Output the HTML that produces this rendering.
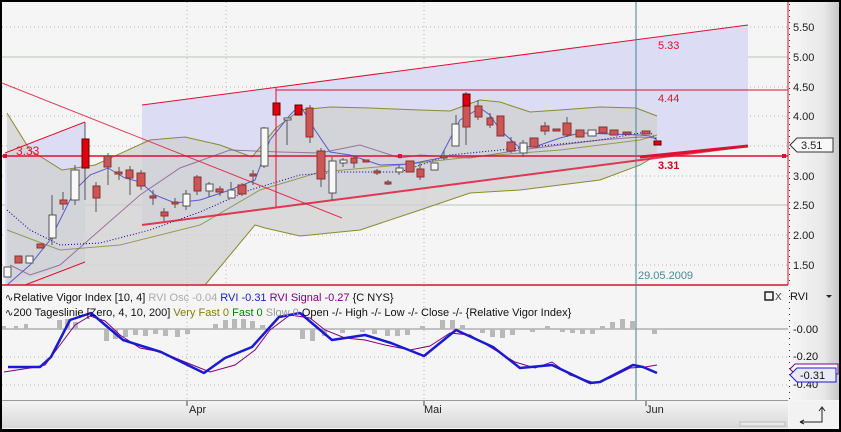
<!DOCTYPE html>
<html><head><meta charset="utf-8"><style>
html,body{margin:0;padding:0;background:#000;}
svg{display:block;font-family:"Liberation Sans",sans-serif;}
</style></head><body>
<svg width="841" height="432" viewBox="0 0 841 432" xmlns="http://www.w3.org/2000/svg">
<defs>
<linearGradient id="ax" x1="0" x2="1" y1="0" y2="0"><stop offset="0" stop-color="#f6f6f6"/><stop offset="0.7" stop-color="#e8e8e8"/><stop offset="1" stop-color="#c8c8c8"/></linearGradient>
<linearGradient id="tx" x1="0" x2="0" y1="0" y2="1"><stop offset="0" stop-color="#f4f4f4"/><stop offset="1" stop-color="#d8d8d8"/></linearGradient>
</defs>
<rect x="0" y="0" width="841" height="432" fill="#000"/>
<rect x="2" y="2" width="837" height="427" fill="#f5f5f5"/>
<!-- right axis -->
<rect x="789" y="2" width="50" height="398" fill="url(#ax)"/>
<!-- grid -->
<g stroke="#b8b8b8" stroke-dasharray="1,3">
<line x1="2" y1="27" x2="788" y2="27"/><line x1="2" y1="87" x2="788" y2="87"/><line x1="2" y1="116" x2="788" y2="116"/>
<line x1="2" y1="146" x2="788" y2="146"/><line x1="2" y1="176" x2="788" y2="176"/><line x1="2" y1="235" x2="788" y2="235"/><line x1="2" y1="265" x2="788" y2="265"/>
<line x1="187" y1="2" x2="187" y2="400"/><line x1="424" y1="2" x2="424" y2="400"/><line x1="226" y1="2" x2="226" y2="285"/>
<line x1="2" y1="357" x2="788" y2="357"/><line x1="2" y1="385" x2="788" y2="385"/>
</g>
<g stroke="#b8c4b8"><line x1="2" y1="57" x2="788" y2="57"/><line x1="2" y1="205" x2="788" y2="205"/></g>
<!-- channels -->
<polygon points="142,105 748,25 748,146 142,225" fill="#dcdcf4"/>
<polygon points="5,153 85,122 85,262 5,285" fill="#dcdcf4"/>
<!-- bollinger -->
<polygon points="7,113 30,150 62,170 95,165 150,140 185,137 220,145 252,157 276,128 300,110 330,107 370,108 420,110 450,111 480,100 500,102 530,112 560,110 600,107 636,108 657,116 657,155 640,165 600,180 520,190 470,193 420,210 360,230 300,236 265,228 255,225 205,285 7,285" fill="#cfcfcf" opacity="0.7"/>
<polyline points="7,113 30,150 62,170 95,165 150,140 185,137 220,145 252,157 276,128 300,110 330,107 370,108 420,110 450,111 480,100 500,102 530,112 560,110 600,107 636,108 657,116" fill="none" stroke="#8a8a30" stroke-width="1"/>
<polyline points="657,155 640,165 600,180 520,190 470,193 420,210 360,230 300,236 265,228 255,225 205,285" fill="none" stroke="#8a8a30"/>
<polyline points="7,230 60,250 120,245 200,225 260,190 320,172 400,165 470,157 560,150 640,140 657,135" fill="none" stroke="#8a8a30" opacity="0.8"/>
<polyline points="10,265 30,275 60,265 100,230 140,195 180,168 230,150 280,152 320,153 360,145 400,158 420,155 470,158 520,150 600,140 640,137 657,138" fill="none" stroke="#8a5a8a" opacity="0.8"/>
<polyline points="7,210 30,230 60,245 100,243 150,230 200,212 250,190 300,175 340,172 400,172 450,155 500,150 550,145 600,140 640,133 650,132 657,140" fill="none" stroke="#000080" stroke-dasharray="1,2"/>
<polyline points="7,285 30,265 50,240 75,190 90,175 108,168 125,178 140,182 155,195 175,203 200,200 230,190 255,180 270,140 290,115 300,105 315,130 330,152 350,155 380,165 410,164 440,158 460,120 480,108 490,115 500,130 520,148 540,145 560,138 580,133 610,134 640,135 650,136 657,140" fill="none" stroke="#5a5ad0"/>
<!-- red lines -->
<g stroke="#e01030" fill="none">
<line x1="142" y1="105" x2="748" y2="25"/>
<line x1="142" y1="225" x2="748" y2="146" stroke-width="2" opacity="0.8"/>
<line x1="640" y1="157" x2="748" y2="146" stroke-width="3"/>
<line x1="5" y1="153" x2="85" y2="122"/>
<line x1="25" y1="285" x2="85" y2="262"/>
<line x1="2" y1="83" x2="342" y2="218" opacity="0.8"/>
<line x1="276" y1="90" x2="788" y2="90"/>
<line x1="276" y1="88" x2="276" y2="207"/>
<line x1="2" y1="156" x2="788" y2="156" stroke-width="1.5"/>
<line x1="2" y1="285" x2="788" y2="285" stroke-width="1.5"/>
<line x1="788" y1="2" x2="788" y2="285"/>
</g>
<rect x="3" y="154" width="4" height="4" fill="#e01030"/><rect x="398" y="154" width="4" height="4" fill="#e01030"/><rect x="782" y="154" width="4" height="4" fill="#e01030"/>
<text x="16" y="155" font-size="12" fill="#e01030">3.33</text>
<text x="658" y="49" font-size="11" fill="#e01030">5.33</text>
<text x="658" y="102" font-size="11" fill="#e01030">4.44</text>
<text x="658" y="169" font-size="11" fill="#d00020" font-weight="bold">3.31</text>
<!-- candles -->
<g stroke="#555" stroke-width="1">
<line x1="52" y1="195" x2="52" y2="245"/><line x1="63" y1="192" x2="63" y2="210"/><line x1="75" y1="165" x2="75" y2="205"/>
<line x1="85" y1="122" x2="85" y2="200"/><line x1="96" y1="182" x2="96" y2="212"/><line x1="108" y1="153" x2="108" y2="185"/>
<line x1="119" y1="167" x2="119" y2="180"/><line x1="130" y1="166" x2="130" y2="195"/><line x1="141" y1="170" x2="141" y2="190"/>
<line x1="153" y1="190" x2="153" y2="205"/><line x1="164" y1="208" x2="164" y2="221"/><line x1="175" y1="198" x2="175" y2="208"/>
<line x1="186" y1="190" x2="186" y2="210"/><line x1="197" y1="175" x2="197" y2="195"/><line x1="209" y1="182" x2="209" y2="197"/>
<line x1="220" y1="186" x2="220" y2="196"/><line x1="231" y1="182" x2="231" y2="198"/><line x1="242" y1="183" x2="242" y2="196"/>
<line x1="253" y1="170" x2="253" y2="185"/><line x1="264" y1="127" x2="264" y2="168"/><line x1="287" y1="118" x2="287" y2="145"/>
<line x1="310" y1="105" x2="310" y2="143"/><line x1="321" y1="148" x2="321" y2="187"/><line x1="332" y1="157" x2="332" y2="200"/>
<line x1="343" y1="158" x2="343" y2="167"/><line x1="354" y1="155" x2="354" y2="168"/><line x1="377" y1="169" x2="377" y2="175"/>
<line x1="388" y1="180" x2="388" y2="185"/><line x1="399" y1="165" x2="399" y2="175"/><line x1="420" y1="163" x2="420" y2="180"/>
<line x1="444" y1="150" x2="444" y2="160"/><line x1="456" y1="115" x2="456" y2="145"/><line x1="466" y1="92" x2="466" y2="145"/>
<line x1="478" y1="100" x2="478" y2="120"/><line x1="490" y1="113" x2="490" y2="128"/><line x1="511" y1="137" x2="511" y2="153"/>
<line x1="523" y1="140" x2="523" y2="157"/><line x1="545" y1="122" x2="545" y2="135"/><line x1="567" y1="117" x2="567" y2="137"/>
</g>
<g fill="#cc5555" stroke="#883333">
<rect x="15" y="256" width="7" height="7"/><rect x="37" y="244" width="7" height="4"/><rect x="60" y="200" width="7" height="4"/>
<rect x="93" y="186" width="7" height="12"/><rect x="104" y="156" width="7" height="11"/><rect x="115" y="172" width="7" height="2"/>
<rect x="126" y="170" width="7" height="8"/><rect x="137" y="173" width="8" height="13"/><rect x="150" y="196" width="6" height="2"/>
<rect x="161" y="212" width="7" height="4"/><rect x="172" y="202" width="6" height="2"/><rect x="194" y="177" width="7" height="14"/>
<rect x="216" y="189" width="7" height="3"/><rect x="238" y="185" width="8" height="9"/><rect x="250" y="174" width="6" height="2"/>
<rect x="306" y="108" width="7" height="29"/><rect x="317" y="151" width="8" height="28"/><rect x="351" y="158" width="6" height="5"/>
<rect x="363" y="160" width="6" height="2"/><rect x="374" y="171" width="6" height="2"/><rect x="385" y="182" width="6" height="2"/>
<rect x="406" y="161" width="8" height="11"/><rect x="417" y="169" width="7" height="8"/><rect x="441" y="156" width="6" height="2"/>
<rect x="475" y="106" width="7" height="11"/><rect x="487" y="118" width="6" height="7"/><rect x="497" y="116" width="7" height="20"/>
<rect x="507" y="142" width="8" height="9"/><rect x="530" y="138" width="8" height="9"/><rect x="541" y="126" width="8" height="5"/>
<rect x="553" y="129" width="7" height="2"/><rect x="563" y="123" width="8" height="12"/><rect x="576" y="130" width="8" height="7"/>
<rect x="599" y="127" width="8" height="6"/><rect x="610" y="130" width="8" height="5"/><rect x="623" y="132" width="8" height="2"/>
<rect x="642" y="131" width="8" height="3"/><rect x="463" y="100" width="7" height="27"/>
</g>
<g fill="#e00010" stroke="#600">
<rect x="82" y="139" width="7" height="29"/><rect x="273" y="103" width="7" height="12"/><rect x="295" y="105" width="7" height="10"/>
<rect x="463" y="94" width="7" height="12"/><rect x="654" y="141" width="7" height="4"/>
</g>
<g fill="#f8f8f8" stroke="#555">
<rect x="4" y="267" width="7" height="10"/><rect x="26" y="256" width="7" height="7"/><rect x="49" y="215" width="7" height="23"/>
<rect x="71" y="170" width="8" height="30"/><rect x="183" y="194" width="7" height="12"/><rect x="206" y="184" width="7" height="7"/>
<rect x="228" y="190" width="7" height="8"/><rect x="261" y="128" width="7" height="38"/><rect x="284" y="118" width="7" height="2"/>
<rect x="329" y="161" width="7" height="32"/><rect x="340" y="160" width="7" height="3"/><rect x="396" y="168" width="7" height="4"/>
<rect x="431" y="163" width="7" height="7"/><rect x="452" y="124" width="7" height="22"/><rect x="520" y="143" width="7" height="10"/>
<rect x="588" y="130" width="8" height="6"/>
</g>
<!-- price axis labels -->
<g font-size="11" fill="#222">
<text x="793" y="31">5.50</text><text x="793" y="61">5.00</text><text x="793" y="91">4.50</text><text x="793" y="120">4.00</text>
<text x="793" y="180">3.00</text><text x="793" y="209">2.50</text><text x="793" y="239">2.00</text><text x="793" y="269">1.50</text>
</g>
<g stroke="#333" stroke-dasharray="1,5"><line x1="789.5" y1="4" x2="789.5" y2="284"/></g>
<polygon points="790,145 797,138 833,138 833,152 797,152" fill="#f8f8f8" stroke="#333"/>
<text x="801" y="149" font-size="11" fill="#222">3.51</text>
<!-- lower panel -->
<line x1="636" y1="2" x2="636" y2="400" stroke="#4a8090"/>
<text x="638" y="279" font-size="11" fill="#4a8898">29.05.2009</text>
<line x1="2" y1="329" x2="788" y2="329" stroke="#909090"/>
<g fill="#b8b8b8">
<rect x="2" y="326" width="4" height="3"/><rect x="14" y="326" width="4" height="3"/><rect x="24" y="324" width="4" height="5"/>
<rect x="57" y="320" width="5" height="9"/><rect x="65" y="319" width="5" height="10"/><rect x="73" y="322" width="5" height="7"/>
<rect x="104" y="329" width="5" height="12"/><rect x="113" y="329" width="5" height="10"/><rect x="123" y="329" width="5" height="8"/>
<rect x="133" y="329" width="5" height="6"/><rect x="143" y="329" width="5" height="7"/><rect x="153" y="329" width="5" height="5"/>
<rect x="163" y="329" width="5" height="7"/><rect x="175" y="329" width="5" height="8"/><rect x="185" y="329" width="5" height="5"/>
<rect x="213" y="324" width="5" height="5"/><rect x="223" y="320" width="5" height="9"/><rect x="232" y="319" width="5" height="10"/>
<rect x="241" y="319" width="5" height="10"/><rect x="250" y="321" width="5" height="8"/><rect x="260" y="325" width="5" height="4"/>
<rect x="300" y="329" width="5" height="10"/><rect x="310" y="329" width="5" height="12"/><rect x="322" y="329" width="5" height="7"/>
<rect x="340" y="329" width="5" height="4"/><rect x="360" y="329" width="5" height="3"/><rect x="372" y="329" width="5" height="5"/>
<rect x="385" y="329" width="5" height="7"/><rect x="395" y="329" width="5" height="7"/><rect x="405" y="329" width="5" height="6"/>
<rect x="420" y="326" width="5" height="3"/><rect x="440" y="320" width="5" height="9"/><rect x="450" y="320" width="5" height="9"/>
<rect x="460" y="325" width="5" height="4"/><rect x="480" y="329" width="5" height="4"/><rect x="490" y="329" width="5" height="8"/>
<rect x="500" y="329" width="5" height="9"/><rect x="510" y="329" width="5" height="6"/><rect x="530" y="329" width="5" height="3"/>
<rect x="545" y="326" width="5" height="3"/><rect x="560" y="329" width="5" height="3"/><rect x="570" y="329" width="5" height="4"/>
<rect x="580" y="329" width="5" height="5"/><rect x="590" y="329" width="5" height="5"/><rect x="600" y="326" width="5" height="3"/>
<rect x="610" y="322" width="5" height="7"/><rect x="620" y="319" width="5" height="10"/><rect x="630" y="321" width="5" height="8"/>
<rect x="652" y="329" width="5" height="5"/>
</g>
<polyline points="4,372 30,368 45,365 60,345 75,325 90,316 105,321 120,335 140,348 161,352 185,362 210,372 235,365 255,350 270,330 290,315 310,318 325,330 345,338 365,340 385,345 410,350 430,346 450,333 470,335 490,347 515,362 535,368 552,362 570,375 595,383 610,378 630,368 645,367 657,365" fill="none" stroke="#800080" stroke-width="1"/>
<polyline points="8,367 40,367 51,357 70,320 91,313 123,340 161,352 204,373 225,358 252,347 279,317 300,313 332,340 365,335 391,343 424,356 456,330 493,347 520,368 552,365 590,383 600,382 633,365 643,367 657,373" fill="none" stroke="#1a1ad0" stroke-width="2.5" stroke-linejoin="round"/>
<rect x="2" y="286" width="786" height="30" fill="#f5f5f5" opacity="0"/>
<g font-size="11" fill="#111">
<text x="5" y="301"><tspan font-size="10">∿</tspan>Relative Vigor Index [10, 4] <tspan fill="#aaa">RVI Osc -0.04</tspan> <tspan fill="#1a1ad0">RVI -0.31</tspan> <tspan fill="#800080">RVI Signal -0.27</tspan> {C NYS}</text>
<text x="5" y="316"><tspan font-size="10">∿</tspan>200 Tageslinie [Zero, 4, 10, 200] <tspan fill="#808000">Very Fast 0</tspan> <tspan fill="#008000">Fast 0</tspan> <tspan fill="#999">Slow 0</tspan> Open -/- High -/- Low -/- Close -/- {Relative Vigor Index}</text>
<text x="790" y="300">RVI</text>
<text x="793" y="333">-0.00</text><text x="793" y="360">-0.20</text><text x="793" y="388">-0.40</text>
</g>
<rect x="765" y="292" width="8" height="8" fill="none" stroke="#222" stroke-width="1.5"/>
<text x="775" y="300" font-size="10" fill="#444">X</text>
<polygon points="826,295 832,295 829,298" fill="#222"/>
<polygon points="790,369 795,364 838,364 838,374 795,374" fill="#fff" stroke="#800080"/>
<polygon points="790,375 797,368 836,368 836,382 797,382" fill="#e8eaf8" stroke="#1a1ad0"/>
<text x="800" y="379" font-size="11" fill="#111">-0.31</text>
<g stroke="#333" stroke-dasharray="1,5"><line x1="789.5" y1="290" x2="789.5" y2="400"/></g>
<!-- time axis -->
<rect x="2" y="401" width="786" height="27" fill="url(#tx)"/>
<line x1="2" y1="400.5" x2="788" y2="400.5" stroke="#999"/>
<g stroke="#444"><line x1="187" y1="401" x2="187" y2="406"/><line x1="424" y1="401" x2="424" y2="406"/><line x1="646" y1="401" x2="646" y2="406"/></g>
<g font-size="11" fill="#222"><text x="189" y="413">Apr</text><text x="424" y="413">Mai</text><text x="646" y="413">Jun</text></g>
<rect x="740" y="422" width="45" height="4" fill="#e8e8e8" stroke="#bbb"/>
<rect x="789" y="401" width="50" height="27" fill="#f2f2f2"/>
<path d="M800,422 H822 V408 M819,411 L822,407 L825,411 M800,422 l4,-2 M800,422 l4,2" fill="none" stroke="#222"/>
</svg>
</body></html>
